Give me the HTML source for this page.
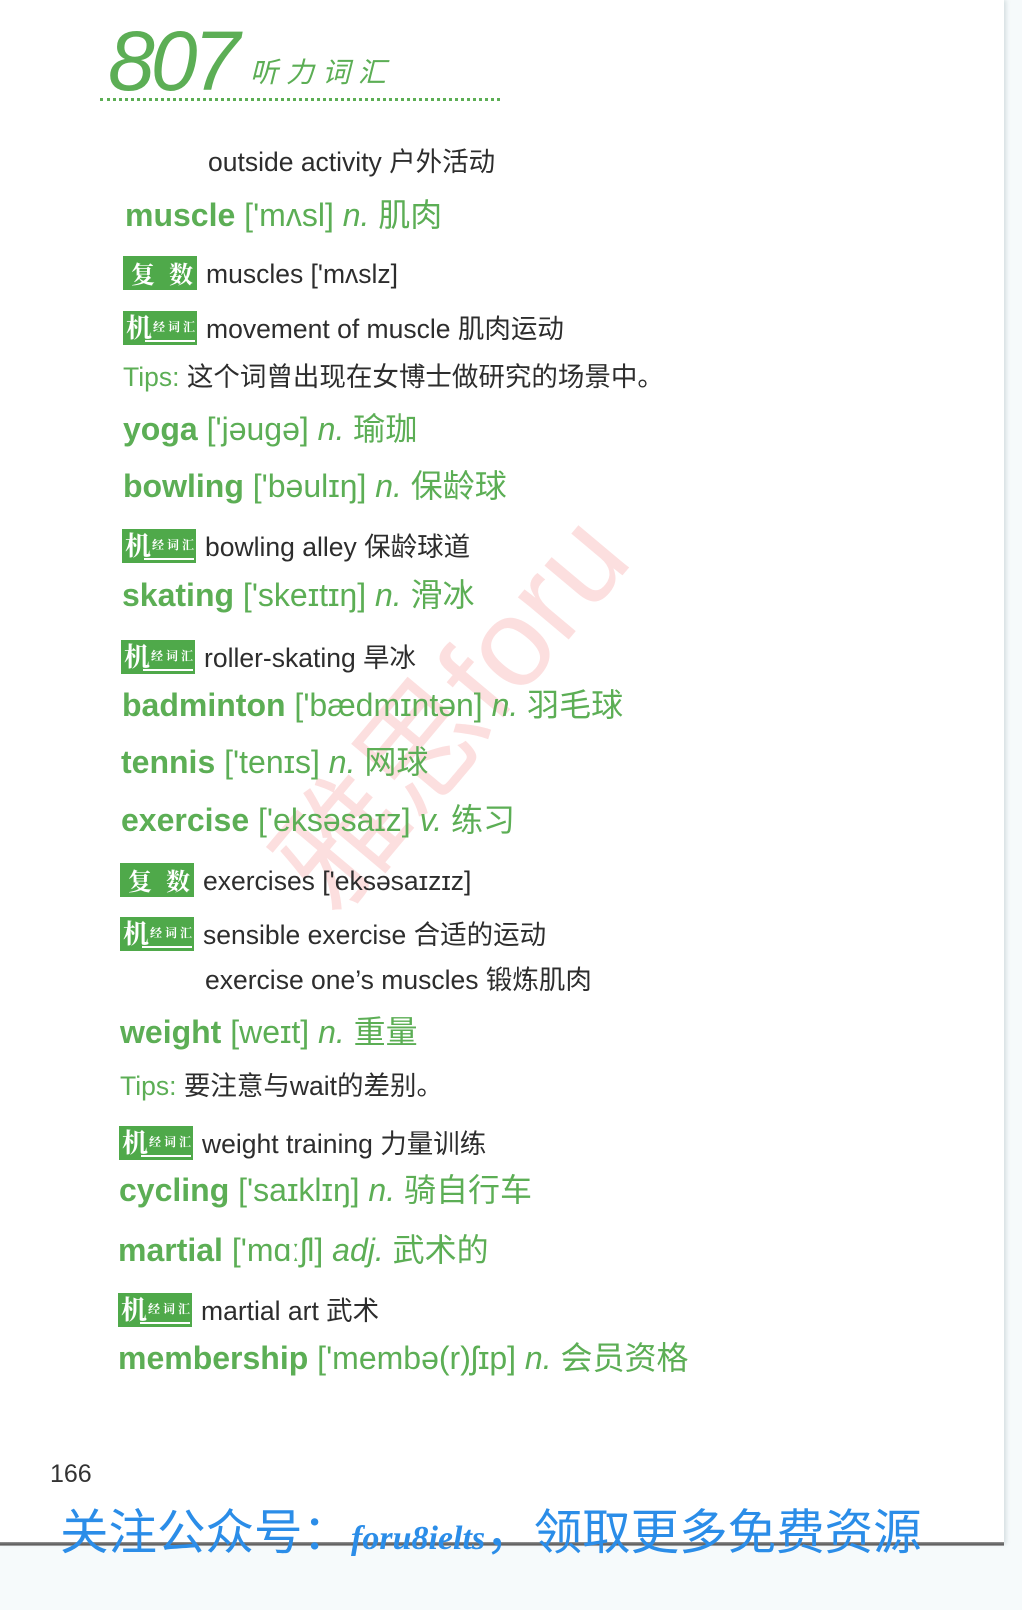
<!DOCTYPE html>
<html><head><meta charset="utf-8"><style>
html,body{margin:0;padding:0}
body{width:1022px;height:1610px;position:relative;overflow:hidden;background:#f6fafb;font-family:"Liberation Sans","Noto Sans CJK SC",sans-serif}
.page{position:absolute;left:0;top:0;width:1004px;height:1544px;background:#fff;box-shadow:2px 0 4px rgba(150,170,175,.35)}
.bline{position:absolute;left:0;top:1542px;width:1004px;height:4px;background:linear-gradient(#9a9a9a,#555 60%,#bbb)}
.r{position:absolute;white-space:nowrap;line-height:40px;height:40px}
.h{color:#5cae55;font-size:32px}
.h b{font-weight:bold}
.h i{font-style:italic}
.t{color:#2d2d2d;font-size:26.5px}
.tip{color:#5cae55}
.badge{display:inline-block;vertical-align:middle;width:74px;height:34px;background:#4fa94a;color:#fff;position:relative;margin-right:9px;top:-3px;font-family:"Noto Serif CJK SC",serif;font-weight:bold}
.fs{font-size:24px;line-height:34px;letter-spacing:14px;padding-left:8px;box-sizing:border-box}
.jj span.a{position:absolute;left:3px;top:0;font-size:26px;line-height:32px}
.jj span.b{position:absolute;left:30px;top:8px;font-size:12px;line-height:16px;letter-spacing:3px}
.jj:after{content:"";position:absolute;left:22px;right:2px;bottom:3px;height:2px;background:#fff}
</style></head><body>
<div class="page"></div>
<div class="bline"></div>
<div style="position:absolute;left:255px;top:850px;transform:rotate(-50deg);transform-origin:0 0;color:rgba(240,80,80,.18);font-size:125px;white-space:nowrap;line-height:125px">雅思foru</div>

<div style="position:absolute;left:108px;top:18px;color:#5cae55;font-size:84px;font-style:italic;line-height:86px;letter-spacing:-4px;font-family:'Liberation Sans',sans-serif">807</div>
<div style="position:absolute;left:250px;top:55px;color:#5cae55;font-size:28px;font-style:italic;letter-spacing:8px;line-height:36px">听力词汇</div>
<div style="position:absolute;left:100px;top:98px;width:400px;border-top:3px dotted #5cae55"></div>

<div class="r t" style="left:208px;top:142px">outside activity 户外活动</div>
<div class="r h" style="left:125px;top:195px"><b>muscle</b> ['mʌsl] <i>n.</i> 肌肉</div>
<div class="r t" style="left:123px;top:254px"><span class="badge fs">复数</span>muscles ['mʌslz]</div>
<div class="r t" style="left:123px;top:309px"><span class="badge jj"><span class="a">机</span><span class="b">经词汇</span></span>movement of muscle 肌肉运动</div>
<div class="r t" style="left:123px;top:357px"><span class="tip">Tips:</span> 这个词曾出现在女博士做研究的场景中。</div>
<div class="r h" style="left:123px;top:409px"><b>yoga</b> ['jəugə] <i>n.</i> 瑜珈</div>
<div class="r h" style="left:123px;top:466px"><b>bowling</b> ['bəulɪŋ] <i>n.</i> 保龄球</div>
<div class="r t" style="left:122px;top:527px"><span class="badge jj"><span class="a">机</span><span class="b">经词汇</span></span>bowling alley 保龄球道</div>
<div class="r h" style="left:122px;top:575px"><b>skating</b> ['skeɪtɪŋ] <i>n.</i> 滑冰</div>
<div class="r t" style="left:121px;top:638px"><span class="badge jj"><span class="a">机</span><span class="b">经词汇</span></span>roller-skating 旱冰</div>
<div class="r h" style="left:122px;top:685px"><b>badminton</b> ['bædmɪntən] <i>n.</i> 羽毛球</div>
<div class="r h" style="left:121px;top:742px"><b>tennis</b> ['tenɪs] <i>n.</i> 网球</div>
<div class="r h" style="left:121px;top:800px"><b>exercise</b> ['eksəsaɪz] <i>v.</i> 练习</div>
<div class="r t" style="left:120px;top:861px"><span class="badge fs">复数</span>exercises ['eksəsaɪzɪz]</div>
<div class="r t" style="left:120px;top:915px"><span class="badge jj"><span class="a">机</span><span class="b">经词汇</span></span>sensible exercise 合适的运动</div>
<div class="r t" style="left:205px;top:960px">exercise one’s muscles 锻炼肌肉</div>
<div class="r h" style="left:120px;top:1012px"><b>weight</b> [weɪt] <i>n.</i> 重量</div>
<div class="r t" style="left:120px;top:1066px"><span class="tip">Tips:</span> 要注意与wait的差别。</div>
<div class="r t" style="left:119px;top:1124px"><span class="badge jj"><span class="a">机</span><span class="b">经词汇</span></span>weight training 力量训练</div>
<div class="r h" style="left:119px;top:1170px"><b>cycling</b> ['saɪklɪŋ] <i>n.</i> 骑自行车</div>
<div class="r h" style="left:118px;top:1230px"><b>martial</b> ['mɑːʃl] <i>adj.</i> 武术的</div>
<div class="r t" style="left:118px;top:1291px"><span class="badge jj"><span class="a">机</span><span class="b">经词汇</span></span>martial art 武术</div>
<div class="r h" style="left:118px;top:1338px"><b>membership</b> ['membə(r)ʃɪp] <i>n.</i> 会员资格</div>

<div class="r" style="left:50px;top:1454px;font-size:25px;color:#333">166</div>
<div style="position:absolute;left:60px;top:1504px;color:#2b8de8;font-size:48.5px;line-height:58px;white-space:nowrap">关注公众号：<span style="font-family:'Liberation Serif',serif;font-style:italic;font-weight:bold;font-size:34px">foru8ielts</span>，领取更多免费资源</div>
</body></html>
